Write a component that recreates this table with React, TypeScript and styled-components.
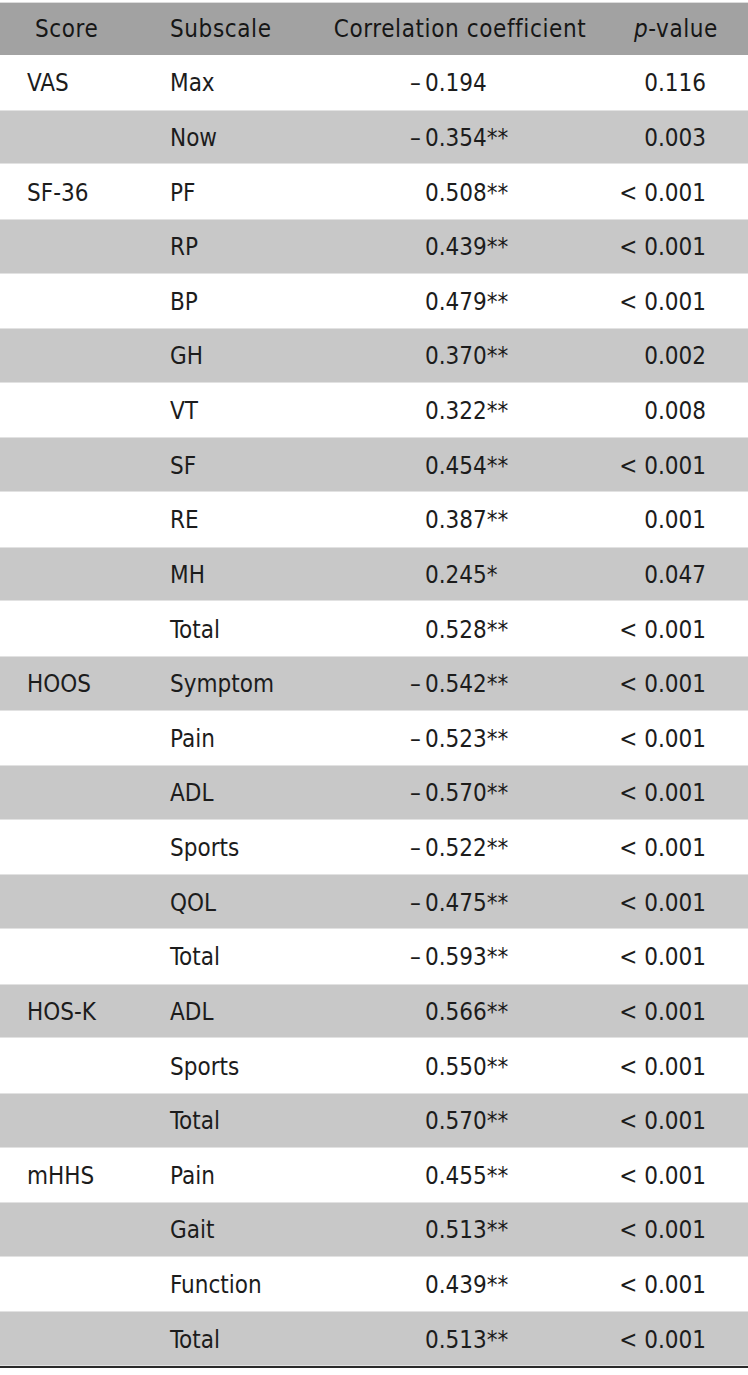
import React from 'react';
import styled, { createGlobalStyle } from 'styled-components';

type Row = {
  score?: string;
  sub: string;
  r: string;
  p: string;
};

const rows: Row[] = [
  { score: 'VAS', sub: 'Max', r: '–0.194', p: '0.116' },
  { sub: 'Now', r: '–0.354**', p: '0.003' },
  { score: 'SF-36', sub: 'PF', r: '0.508**', p: '< 0.001' },
  { sub: 'RP', r: '0.439**', p: '< 0.001' },
  { sub: 'BP', r: '0.479**', p: '< 0.001' },
  { sub: 'GH', r: '0.370**', p: '0.002' },
  { sub: 'VT', r: '0.322**', p: '0.008' },
  { sub: 'SF', r: '0.454**', p: '< 0.001' },
  { sub: 'RE', r: '0.387**', p: '0.001' },
  { sub: 'MH', r: '0.245*', p: '0.047' },
  { sub: 'Total', r: '0.528**', p: '< 0.001' },
  { score: 'HOOS', sub: 'Symptom', r: '–0.542**', p: '< 0.001' },
  { sub: 'Pain', r: '–0.523**', p: '< 0.001' },
  { sub: 'ADL', r: '–0.570**', p: '< 0.001' },
  { sub: 'Sports', r: '–0.522**', p: '< 0.001' },
  { sub: 'QOL', r: '–0.475**', p: '< 0.001' },
  { sub: 'Total', r: '–0.593**', p: '< 0.001' },
  { score: 'HOS-K', sub: 'ADL', r: '0.566**', p: '< 0.001' },
  { sub: 'Sports', r: '0.550**', p: '< 0.001' },
  { sub: 'Total', r: '0.570**', p: '< 0.001' },
  { score: 'mHHS', sub: 'Pain', r: '0.455**', p: '< 0.001' },
  { sub: 'Gait', r: '0.513**', p: '< 0.001' },
  { sub: 'Function', r: '0.439**', p: '< 0.001' },
  { sub: 'Total', r: '0.513**', p: '< 0.001' },
];

const GlobalStyle = createGlobalStyle`
  html, body {
    margin: 0;
    padding: 0;
    background: #fff;
  }
  body {
    font-family: "DejaVu Sans Condensed", "Liberation Sans", sans-serif;
    color: #1c1c1c;
  }
`;

const Page = styled.div`
  width: 748px;
  padding-top: 2px;
`;

const Table = styled.div`
  border-top: 1px solid #dcdcdc;
  border-bottom: 2px solid #2a2a2a;
`;

const Line = styled.div<{ $shade: 'head' | 'gray' | 'white' }>`
  display: grid;
  grid-template-columns: 170px 150px 280px 148px;
  align-items: center;
  height: ${(p) => (p.$shade === 'head' ? '52px' : '54.625px')};
  padding-top: ${(p) => (p.$shade === 'head' ? '0' : '2px')};
  box-sizing: border-box;
  background: ${(p) =>
    p.$shade === 'head' ? '#a2a2a2' : p.$shade === 'gray' ? '#c8c8c8' : '#ffffff'};
  border-top: ${(p) => (p.$shade === 'gray' ? '1px solid #e2e2e2' : 'none')};
  border-bottom: ${(p) => (p.$shade === 'gray' ? '1px solid #e2e2e2' : 'none')};
  font-size: 24px;
  line-height: 1;
`;

const HeadCell = styled.div<{ $align: 'left' | 'center' | 'right'; $pad?: string }>`
  text-align: ${(p) => p.$align};
  padding: ${(p) => p.$pad || '0'};
  letter-spacing: 0.6px;
  color: #161616;
  white-space: nowrap;
`;

const Cell = styled.div<{ $align?: 'left' | 'right'; $pad?: string }>`
  text-align: ${(p) => p.$align || 'left'};
  padding: ${(p) => p.$pad || '0'};
  white-space: nowrap;
`;

const NumCell = styled.div`
  padding-left: 90px;
  white-space: nowrap;
`;

const Sign = styled.span`
  display: inline-block;
  width: 15px;
`;

const Italic = styled.i`
  font-style: italic;
`;

function Coef({ value }: { value: string }) {
  const neg = value.startsWith('–');
  return (
    <NumCell>
      <Sign>{neg ? '–' : ''}</Sign>
      {neg ? value.slice(1) : value}
    </NumCell>
  );
}

export default function App() {
  return (
    <Page>
      <GlobalStyle />
      <Table>
        <Line $shade='head'>
          <HeadCell $align='left' $pad='0 0 0 35px'>Score</HeadCell>
          <HeadCell $align='left'>Subscale</HeadCell>
          <HeadCell $align='center'>Correlation coefficient</HeadCell>
          <HeadCell $align='right' $pad='0 30px 0 0'>
            <Italic>p</Italic>-value
          </HeadCell>
        </Line>
        {rows.map((row, i) => (
          <Line key={i} $shade={i % 2 === 0 ? 'white' : 'gray'}>
            <Cell $pad='0 0 0 27px'>{row.score}</Cell>
            <Cell>{row.sub}</Cell>
            <Coef value={row.r} />
            <Cell $align='right' $pad='0 42px 0 0'>{row.p}</Cell>
          </Line>
        ))}
      </Table>
    </Page>
  );
}
